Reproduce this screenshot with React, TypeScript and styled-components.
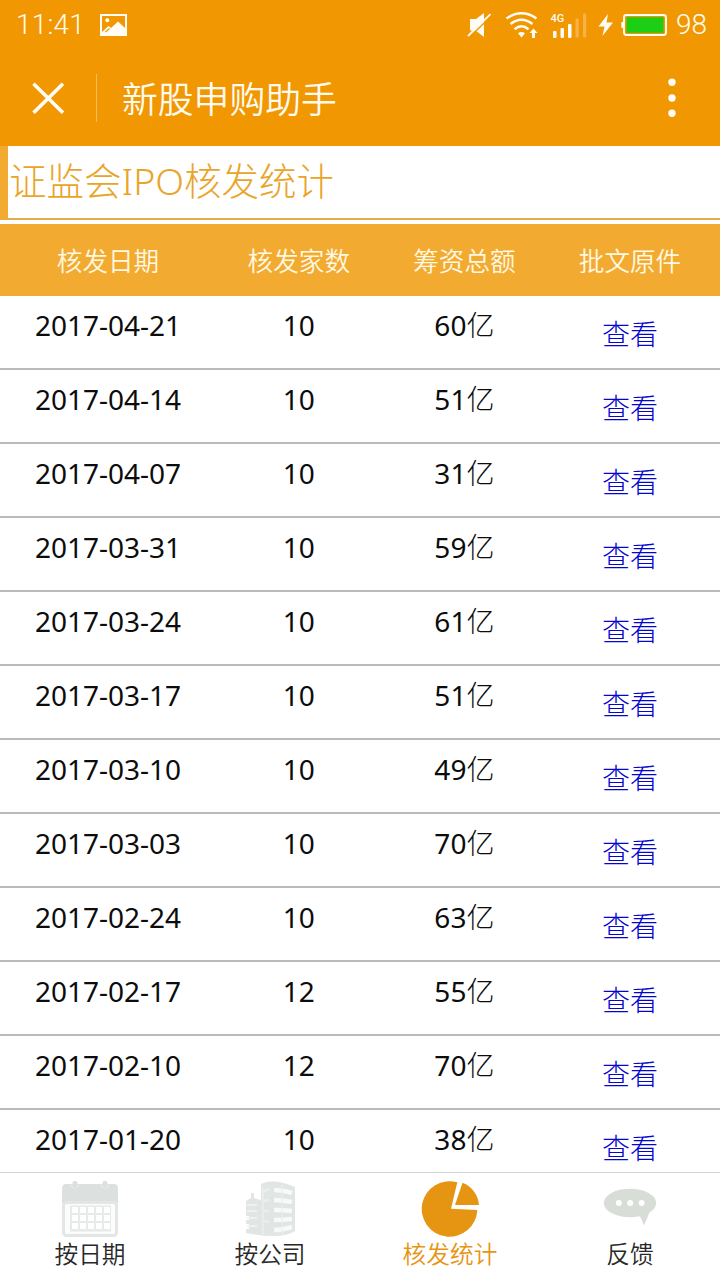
import React from "react";
import styled, { createGlobalStyle } from "styled-components";

const GlobalStyle = createGlobalStyle`
  * { box-sizing: border-box; }
  body {
    margin: 0;
    background: #fff;
    font-family: "Noto Sans", "Noto Sans CJK SC", sans-serif;
  }
`;

const Screen = styled.div`
  width: 720px;
  height: 1280px;
  display: flex;
  flex-direction: column;
  overflow: hidden;
  background: #fff;
`;

const TopBar = styled.header`
  flex: none;
  height: 146px;
  background: #f19702;
  color: #fffbee;
`;

const StatusBar = styled.div`
  height: 50px;
  display: flex;
  align-items: center;
  justify-content: space-between;
  padding: 0 13px 0 16px;
  font-family: Roboto, sans-serif;
  font-weight: 300;
  font-size: 28px;
  line-height: 50px;
`;

const Clock = styled.span`
  width: 84px;
  letter-spacing: 0.2px;
`;

const StatusGroup = styled.div`
  display: flex;
  align-items: center;
`;

const BatteryText = styled.span`
  margin-left: 9px;
`;

const NavBar = styled.div`
  height: 96px;
  display: flex;
  align-items: center;
  padding: 0 44px 0 32px;
`;

const Separator = styled.div`
  width: 1px;
  height: 48px;
  margin: 0 25px 0 32px;
  background: #f7bd5c;
`;

const NavTitle = styled.h1`
  flex: 1;
  margin: 0;
  padding-bottom: 2px;
  font-size: 35.8px;
  line-height: 94px;
  font-weight: 350;
  font-family: "Noto Sans CJK SC", sans-serif;
`;

const SectionTitle = styled.h2`
  flex: none;
  height: 74px;
  margin: 0 0 4px;
  padding-left: 1px;
  border-left: 8px solid #f2ab30;
  border-bottom: 2px solid #e5ae45;
  color: #e9a52a;
  font-size: 37.5px;
  line-height: 70px;
  font-weight: 300;
`;

const TableArea = styled.main`
  flex: 1;
  min-height: 0;
  overflow: hidden;
`;

const Columns = styled.div`
  display: grid;
  grid-template-columns: 30% 23% 23% 23%;
  text-align: center;
`;

const HeadRow = styled(Columns)`
  height: 72px;
  background: #f2ab30;
  color: #fff8e2;
  font-size: 25.6px;
  line-height: 75px;
  font-weight: 350;
`;

const Row = styled(Columns)`
  height: 74px;
  border-bottom: 2px solid #bbb9bb;
  color: #0c0c0c;
  font-size: 28px;
  line-height: 58px;
`;

const Unit = styled.span`
  font-weight: 300;
`;

const ViewLink = styled.a`
  color: #0505d0;
  font-weight: 300;
  line-height: 76px;
  height: 72px;
`;

const TabBar = styled.nav`
  flex: none;
  height: 108px;
  display: grid;
  grid-template-columns: repeat(4, 1fr);
  border-top: 1px solid #d4d4d4;
  background: #fff;
`;

const Tab = styled.div<{ $active?: boolean }>`
  display: flex;
  flex-direction: column;
  align-items: center;
  padding-top: 7px;
  color: ${(p) => (p.$active ? "#e69512" : "#282828")};
  font-size: 23.7px;
  line-height: 32px;
  font-weight: 350;
`;

const TabIcon = styled.svg`
  display: block;
  flex: none;
  margin-bottom: -2px;
`;

const ImageIcon = () => (
  <svg width="28" height="22" viewBox="0 0 28 22">
    <path fill="#fffdf5" fillRule="evenodd" d="M0 0H27V22H0ZM2 2V18L8.5 12L11 14L18 7.5L25 14V2Z" />
    <circle cx="7.3" cy="6.3" r="2" fill="#fffdf5" />
    <path d="M5.5 18L9.5 14.5" stroke="#f19702" strokeWidth="1.2" />
  </svg>
);

const StatusIcons = () => (
  <svg width="202" height="50" viewBox="465 0 202 50">
    <path fill="#fffdf5" d="M470 19H476L484 13V37L475.5 30.5H470Z" />
    <path d="M469 37.5L492 15.5" stroke="#f19702" strokeWidth="1.5" />
    <path d="M468 36L490.5 14.2" stroke="#fffdf5" strokeWidth="1.8" />
    <g fill="none" stroke="#fffdf5" strokeWidth="2.4">
      <path d="M506.5 18.5Q521.5 8 536.5 18.5" />
      <path d="M510.5 24Q521.5 15.5 532.5 24" />
      <path d="M514.5 29.2Q521.5 23.5 528.5 29.2" />
    </g>
    <path fill="#fffdf5" d="M518 33.3Q521.5 30.5 525 33.3L521.5 37.5Z" />
    <path fill="#fffdf5" d="M533.5 28.5L537.5 33H535V38H532V33H529.5Z" />
    <text x="550.5" y="22" fontSize="11" fontWeight="500" fontFamily="Roboto" fill="#fffdf5">4G</text>
    <g fill="#fffdf5">
      <rect x="553" y="31" width="3.5" height="7" rx="1" />
      <rect x="560.5" y="28" width="3.5" height="10" rx="1" />
      <rect x="568" y="24" width="3.5" height="14" rx="1" />
    </g>
    <g fill="#f7b34a">
      <rect x="575.5" y="18.5" width="3.2" height="19" rx="1" />
      <rect x="583" y="13.5" width="3.2" height="24" rx="1" />
    </g>
    <path fill="#fffdf5" d="M608 14L598.5 26.5H604.5L602.5 36L613 22.5H606.5Z" />
    <rect x="621.3" y="22" width="3" height="6" rx="1" fill="#fffdf5" />
    <rect x="624" y="15" width="42" height="20" rx="2.5" fill="none" stroke="#fffdf5" strokeWidth="1.9" />
    <rect x="626.5" y="17.2" width="37" height="15.6" fill="#1ccf14" />
  </svg>
);

const CloseIcon = () => (
  <svg width="32" height="32" viewBox="0 0 32 32">
    <path d="M1.5 1.8L31 30.8M31 1.8L1.5 30.8" stroke="#fffef8" strokeWidth="3.6" />
  </svg>
);

const MoreIcon = () => (
  <svg width="8" height="40" viewBox="0 0 8 40">
    <g fill="#fffdf5">
      <circle cx="4" cy="4.3" r="3.7" />
      <circle cx="4" cy="20" r="3.7" />
      <circle cx="4" cy="35.3" r="3.7" />
    </g>
  </svg>
);

const CalendarIcon = () => (
  <TabIcon width="60" height="60" viewBox="60 1180 60 60">
    <path d="M66 1184H114Q118 1184 118 1189V1203H62V1189Q62 1184 66 1184Z" fill="#dce0df" />
    <path d="M71 1185Q75 1191 79 1185M101 1185Q105 1191 109 1185" fill="none" stroke="#e9ecea" strokeWidth="1.6" />
    <rect x="72.5" y="1181" width="5" height="7" rx="2" fill="#dce0df" />
    <rect x="102.5" y="1181" width="5" height="7" rx="2" fill="#dce0df" />
    <rect x="63.5" y="1202.5" width="53" height="33" rx="3" fill="#fbfcfb" stroke="#e2e6e5" strokeWidth="3" />
    <rect x="70" y="1205.5" width="41" height="26" fill="#e6eae9" />
    <g fill="#fff">
      {[1207, 1215, 1223].map((y) =>
        [72, 80, 88, 96, 104].map((x) => <rect key={`${x}-${y}`} x={x} y={y} width="6" height="6" />)
      )}
    </g>
  </TabIcon>
);

const BuildingIcon = () => (
  <TabIcon width="60" height="60" viewBox="240 1180 60 60">
    <path d="M246 1201L251 1198V1193H254V1198L261 1200V1184Q273 1178 295 1187V1231Q282 1240 246 1233V1229H249V1224H246V1220H249V1216H246Z" fill="#e1e6e4" />
    <path d="M263 1188V1234" stroke="#e8ecea" strokeWidth="2" />
    <g fill="none" stroke="#f8f9f9" strokeWidth="4.5">
      <path d="M274 1190Q282 1190 292 1193" />
      <path d="M274 1200Q282 1200 292 1202" />
      <path d="M274 1210Q282 1210 292 1211" />
      <path d="M274 1220Q282 1220 292 1219" />
      <path d="M274 1230Q282 1230 292 1227" />
    </g>
    <path d="M282 1185V1235" stroke="#eceeed" strokeWidth="1" />
    <path d="M247 1205H257M247 1211H257M247 1218H257M247 1226H257" stroke="#eef1f0" strokeWidth="2.2" />
    <path d="M264 1191L269 1189M264 1201L269 1200M264 1211H269M264 1221L269 1222" stroke="#eceeed" strokeWidth="2.5" />
  </TabIcon>
);

const PieIcon = () => (
  <TabIcon width="60" height="60" viewBox="420 1180 60 60">
    <path d="M457.3 1182.3A27.8 27.8 0 1 0 477.3 1210L451 1208.7Z" fill="#e69512" />
    <path d="M462.5 1182.8A26 26 0 0 1 479 1205H455Z" fill="#e69512" />
  </TabIcon>
);

const ChatIcon = () => (
  <TabIcon width="60" height="60" viewBox="600 1180 60 60">
    <ellipse cx="630" cy="1203" rx="26.2" ry="14.3" fill="#d9ddd8" />
    <path d="M638 1214Q642 1218 643.5 1225.5Q646 1222 650 1211Z" fill="#d9ddd8" />
    <g fill="#fff">
      <circle cx="618.8" cy="1203" r="3" />
      <circle cx="630.2" cy="1203" r="3" />
      <circle cx="641.6" cy="1203" r="3" />
    </g>
  </TabIcon>
);

const records: [string, number, number][] = [
  ["2017-04-21", 10, 60],
  ["2017-04-14", 10, 51],
  ["2017-04-07", 10, 31],
  ["2017-03-31", 10, 59],
  ["2017-03-24", 10, 61],
  ["2017-03-17", 10, 51],
  ["2017-03-10", 10, 49],
  ["2017-03-03", 10, 70],
  ["2017-02-24", 10, 63],
  ["2017-02-17", 12, 55],
  ["2017-02-10", 12, 70],
  ["2017-01-20", 10, 38],
];

export default function App() {
  return (
    <Screen>
      <GlobalStyle />
      <TopBar>
        <StatusBar>
          <StatusGroup>
            <Clock>11:41</Clock>
            <ImageIcon />
          </StatusGroup>
          <StatusGroup>
            <StatusIcons />
            <BatteryText>98</BatteryText>
          </StatusGroup>
        </StatusBar>
        <NavBar>
          <CloseIcon />
          <Separator />
          <NavTitle>新股申购助手</NavTitle>
          <MoreIcon />
        </NavBar>
      </TopBar>
      <SectionTitle>证监会IPO核发统计</SectionTitle>
      <TableArea>
        <HeadRow>
          <span>核发日期</span>
          <span>核发家数</span>
          <span>筹资总额</span>
          <span>批文原件</span>
        </HeadRow>
        {records.map(([date, count, amount]) => (
          <Row key={date}>
            <span>{date}</span>
            <span>{count}</span>
            <span>
              {amount}
              <Unit>亿</Unit>
            </span>
            <ViewLink>查看</ViewLink>
          </Row>
        ))}
      </TableArea>
      <TabBar>
        <Tab>
          <CalendarIcon />
          按日期
        </Tab>
        <Tab>
          <BuildingIcon />
          按公司
        </Tab>
        <Tab $active>
          <PieIcon />
          核发统计
        </Tab>
        <Tab>
          <ChatIcon />
          反馈
        </Tab>
      </TabBar>
    </Screen>
  );
}
